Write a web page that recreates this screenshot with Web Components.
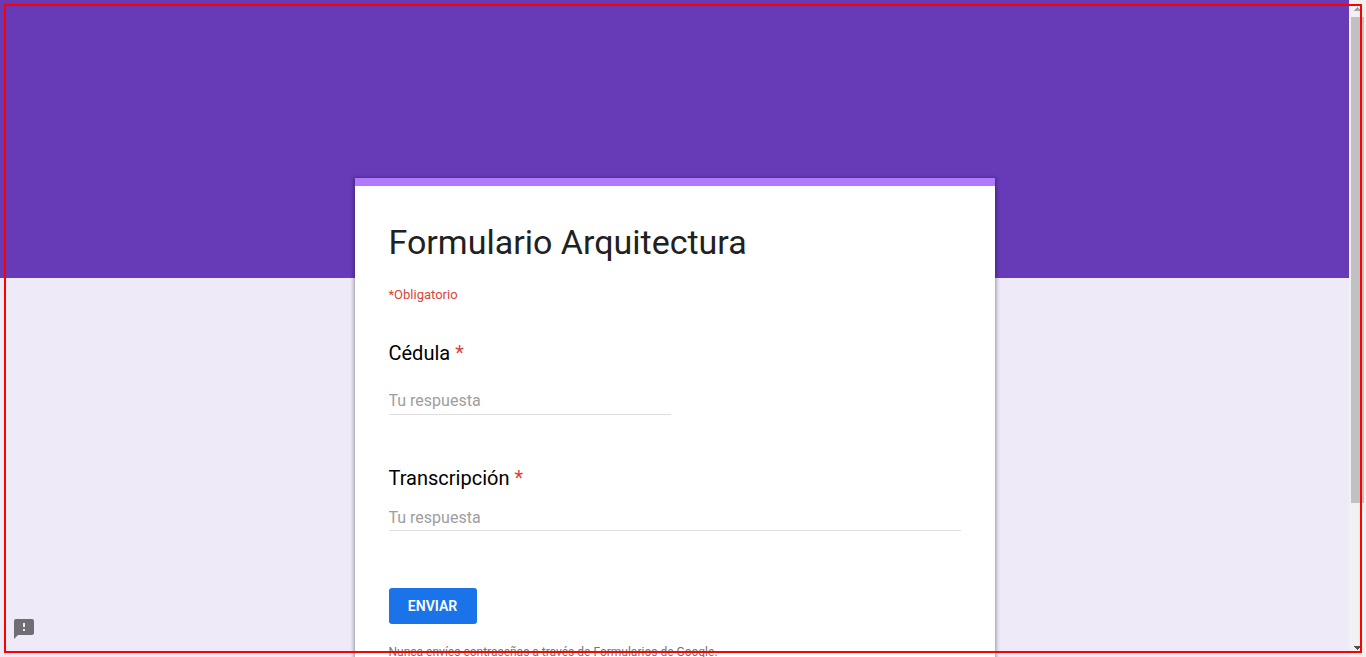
<!DOCTYPE html>
<html lang="es">
<head>
<meta charset="utf-8">
<meta name="viewport" content="width=device-width, initial-scale=1">
<title>Formulario Arquitectura</title>
<style>
  html, body { margin: 0; height: 100%; }
  body { overflow: hidden; font-family: Roboto, Arial, sans-serif; font-size: 13px; color: #000; }
</style>
</head>
<body>
<form-page>
  <form-card heading="Formulario Arquitectura">
    <form-question label="Cédula" size="short"></form-question>
    <form-question label="Transcripción" size="long"></form-question>
    <submit-button>ENVIAR</submit-button>
    <form-note>Nunca envíes contraseñas a través de Formularios de Google.</form-note>
  </form-card>
  <report-button slot="overlay"></report-button>
  <scroll-track slot="track"></scroll-track>
</form-page>

<script>
const define = (name, html, setup) => {
  const template = document.createElement('template');
  template.innerHTML = html;
  customElements.define(name, class extends HTMLElement {
    constructor() {
      super();
      this.attachShadow({ mode: 'open' }).append(template.content.cloneNode(true));
    }
    connectedCallback() { if (setup) setup(this, this.shadowRoot); }
  });
};

define('form-page', `
  <style>
    :host { display: flex; height: 100vh; position: relative; background: #eeeaf7; }
    main { flex: 1; min-width: 0; overflow: hidden; }
    .banner { height: 278px; background: #673ab7; }
    .content { margin-top: -100px; display: flex; justify-content: center; }
    .frame { position: absolute; inset: 4px; border: 2px solid #f00; pointer-events: none; }
  </style>
  <main>
    <div class="banner"></div>
    <div class="content"><slot></slot></div>
  </main>
  <slot name="track"></slot>
  <slot name="overlay"></slot>
  <div class="frame"></div>`);

define('form-card', `
  <style>
    :host { display: block; box-sizing: border-box; width: 100%; max-width: 640px; background: #fff;
      border-top: 8px solid #b079ff; box-shadow: 0 1px 4px 1px rgba(0,0,0,.37); }
    form { display: flex; flex-direction: column; padding: 34px; }
    h1 { margin: 0; font-size: 34px; line-height: 44px; font-weight: 400; color: #212121; }
    p { margin: 22px 0 0; font-size: 13px; line-height: 18px; color: #db4437; }
  </style>
  <form>
    <h1></h1>
    <p>*Obligatorio</p>
    <slot></slot>
  </form>`, (el, root) => {
    root.querySelector('h1').textContent = el.getAttribute('heading');
  });

define('form-question', `
  <style>
    :host { display: flex; flex-direction: column; align-items: flex-start; margin-top: 36px; }
    :host([size="long"]) { margin-top: 50px; }
    label { font-size: 20px; line-height: 27px; }
    .required { color: #db4437; }
    input { box-sizing: border-box; width: 100%; height: 27px; margin-top: 12px; padding: 0; border: 0;
      border-bottom: 1px solid #dedede; border-radius: 0; background: none; outline: 0;
      font: inherit; font-size: 16px; color: #000; }
    input::placeholder { color: #9e9e9e; opacity: 1; }
    :host([size="short"]) input { width: 282px; max-width: 100%; height: 28px; margin-top: 20px; }
  </style>
  <label for="answer"><span class="name"></span> <span class="required">*</span></label>
  <input id="answer" type="text" placeholder="Tu respuesta" required>`, (el, root) => {
    root.querySelector('.name').textContent = el.getAttribute('label');
  });

define('submit-button', `
  <style>
    :host { display: block; margin-top: 57px; }
    button { min-width: 88px; height: 36px; padding: 0 16px 1px; border: 0; border-radius: 3px; background: #1a73e8;
      font: inherit; font-size: 14px; font-weight: 600; color: #fff; display: block; }
  </style>
  <button type="button"><slot></slot></button>`);

define('form-note', `
  <style>
    :host { display: block; margin-top: 20px; font-size: 12px; line-height: 16px; color: #757575; }
  </style>
  <slot></slot>`);

define('report-button', `
  <style>
    :host { position: absolute; left: 12px; bottom: 16px; }
    button { display: block; padding: 0; border: 0; background: none; color: #706d75; }
    svg { display: block; width: 24px; height: 24px; }
  </style>
  <button type="button" aria-label="Informar de un problema">
    <svg viewBox="0 0 24 24" fill="currentColor"><path d="M20 2H4c-1.1 0-2 .9-2 2v18l4-4h14c1.1 0 2-.9 2-2V4c0-1.1-.9-2-2-2zm-7 12h-2v-2h2v2zm0-4h-2V6h2v4z"/></svg>
  </button>`);

define('scroll-track', `
  <style>
    :host { display: flex; flex-direction: column; box-sizing: border-box; width: 17px; background: #f1f1f1; }
    svg { display: block; width: 17px; height: 17px; flex: none; }
    .rail { flex: 1; padding: 0 2px; }
    .thumb { height: 78%; background: #c1c1c1; }
  </style>
  <svg viewBox="0 0 17 17" fill="#a3a3a3" shape-rendering="crispEdges"><path d="M8 7h1v1h1v1h1v1h1v1H5v-1h1V9h1V8h1z"/></svg>
  <div class="rail"><div class="thumb"></div></div>
  <svg viewBox="0 0 17 17" fill="#505050" shape-rendering="crispEdges"><path d="M5 6h7v1h-1v1h-1v1H9v1H8V9H7V8H6V7H5z"/></svg>`);
</script>
</body>
</html>
